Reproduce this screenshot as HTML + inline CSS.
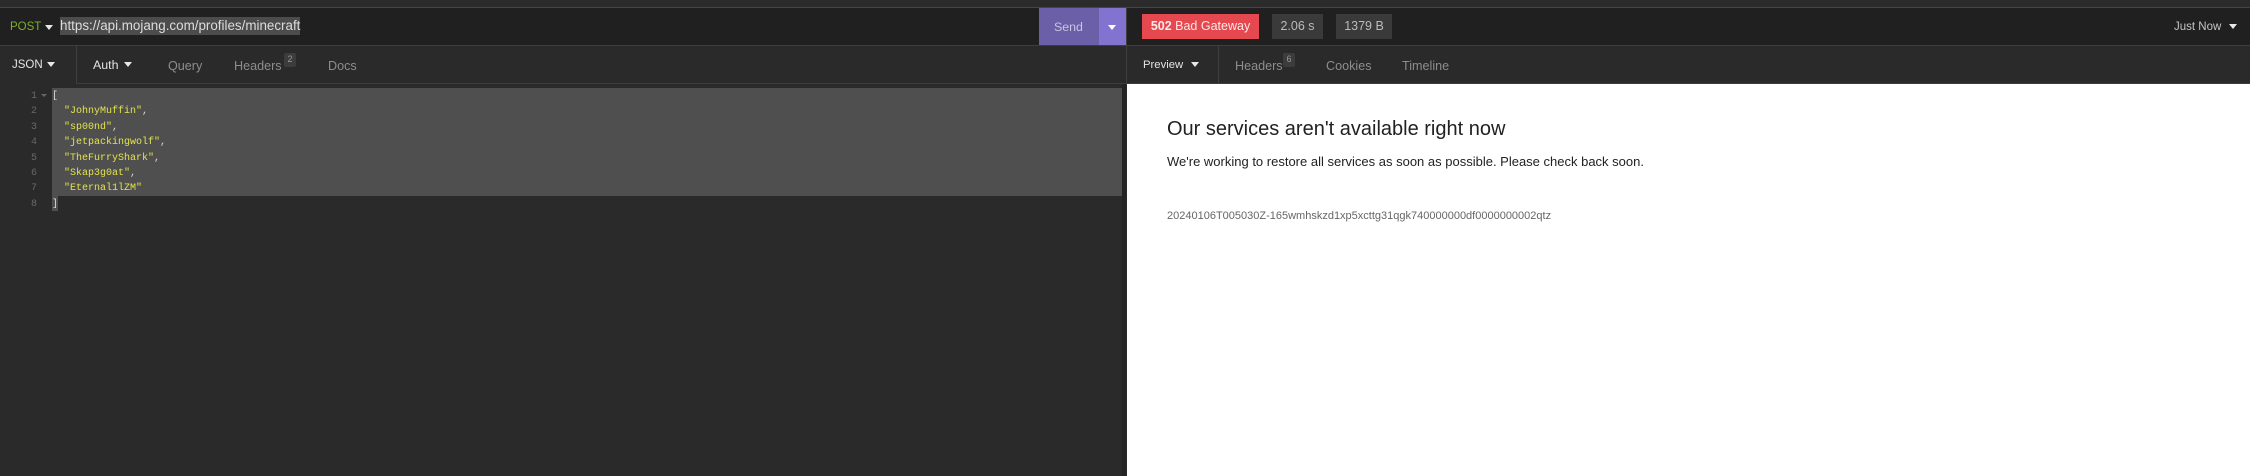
<!DOCTYPE html>
<html><head><meta charset="utf-8">
<style>
html,body{margin:0;padding:0;background:#2a2a2a;}
body{width:2250px;height:476px;position:relative;overflow:hidden;font-family:"Liberation Sans","DejaVu Sans",sans-serif;}
.a{position:absolute;white-space:nowrap;}
.tri{position:absolute;width:0;height:0;border-left:4.500px solid transparent;border-right:4.500px solid transparent;border-top:5px solid #e8e8e8;}
.t{font-size:12.600px;line-height:16px;color:#8d8d8d;}
.w{color:#e4e4e4;}
.ln{position:absolute;left:20px;width:17px;text-align:right;font:10px/15px "Liberation Mono",monospace;color:#686868;}
.c{position:absolute;left:64px;font:10px/15px "Liberation Mono",monospace;color:#e3e34f;white-space:pre;}
.c i{font-style:normal;color:#d8d8d8;}
.bad{position:absolute;top:14px;height:25px;background:#3a3a3a;color:#bbb;font-size:12.500px;line-height:25px;text-align:center;}
.bdg{position:absolute;top:53px;width:12px;height:14px;border-radius:2px;background:#3c3c3c;color:#999;font-size:9px;line-height:13px;text-align:center;}
</style></head><body>
<div class="a" style="left:0;top:0;width:2250px;height:7px;background:#2b2b2b"></div>
<div class="a" style="left:0;top:7px;width:2250px;height:1px;background:#444"></div>
<div class="a" style="left:0;top:8px;width:2250px;height:37px;background:#202020"></div>
<div class="a" style="left:0;top:45px;width:2250px;height:1px;background:#3e3e3e"></div>
<div class="a" style="left:76px;top:83px;width:1050px;height:1px;background:#3e3e3e"></div>
<div class="a" style="left:1126px;top:83px;width:1124px;height:1px;background:#3e3e3e"></div>

<div class="a" style="left:10px;top:19px;font-size:11.500px;line-height:16px;color:#7ab02e">POST</div>
<div class="tri" style="left:45px;top:25px"></div>
<div class="a" style="left:60px;top:17px;width:240px;height:18px;background:#4c4c4c"></div>
<div class="a" style="left:60px;top:18px;width:240px;font-size:13.400px;line-height:16px;color:#dcdcdc">https://api.mojang.com/profiles/minecraft</div>

<div class="a" style="left:1039px;top:8px;width:60px;height:37px;background:#6b5fa8"></div>
<div class="a" style="left:1099px;top:8px;width:27px;height:37px;background:#8373d0"></div>
<div class="a" style="left:1054px;top:8px;font-size:12.400px;line-height:38px;color:#c9c5e2">Send</div>
<div class="tri" style="left:1108px;top:25px;border-top-color:#fff"></div>

<div class="a" style="left:1126px;top:8px;width:1px;height:76px;background:#3e3e3e"></div>

<div class="a" style="left:1142px;top:14px;width:117px;height:25px;background:#e5484f;color:#fbeaea;font-size:12.500px;line-height:25px;text-align:center"><b>502</b> Bad Gateway</div>
<div class="bad" style="left:1272px;width:51px">2.06 s</div>
<div class="bad" style="left:1336px;width:56px">1379 B</div>
<div class="a" style="left:2174px;top:19px;font-size:11.500px;line-height:16px;color:#c4c4c4">Just Now</div>
<div class="tri" style="left:2229px;top:24px"></div>

<div class="a w" style="left:12px;top:57px;font-size:11.500px;line-height:16px">JSON</div>
<div class="tri" style="left:47px;top:62px"></div>
<div class="a" style="left:76px;top:46px;width:1px;height:37px;background:#3e3e3e"></div>
<div class="a w" style="left:93px;top:57px;font-size:12.400px;line-height:16px">Auth</div>
<div class="tri" style="left:124px;top:62px"></div>
<div class="a t" style="left:168px;top:58px">Query</div>
<div class="a t" style="left:234px;top:58px">Headers</div>
<div class="bdg" style="left:284px">2</div>
<div class="a t" style="left:328px;top:58px">Docs</div>

<div class="a w" style="left:1143px;top:57px;font-size:11.300px;line-height:16px">Preview</div>
<div class="tri" style="left:1191px;top:62px"></div>
<div class="a" style="left:1218px;top:46px;width:1px;height:37px;background:#3e3e3e"></div>
<div class="a t" style="left:1235px;top:58px">Headers</div>
<div class="bdg" style="left:1283px">6</div>
<div class="a t" style="left:1326px;top:58px">Cookies</div>
<div class="a t" style="left:1402px;top:58px">Timeline</div>

<div class="a" style="left:52px;top:88px;width:1070px;height:108px;background:#4f4f4f"></div>
<div class="a" style="left:52px;top:196px;width:6px;height:15px;background:#4f4f4f"></div>

<div class="ln" style="top:89px">1</div><div class="ln" style="top:104px">2</div><div class="ln" style="top:119.500px">3</div><div class="ln" style="top:135px">4</div><div class="ln" style="top:150.500px">5</div><div class="ln" style="top:165.500px">6</div><div class="ln" style="top:181px">7</div><div class="ln" style="top:196.500px">8</div>
<div class="a" style="left:41px;top:94px;width:0;height:0;border-left:3px solid transparent;border-right:3px solid transparent;border-top:3px solid #666"></div>
<div class="c" style="left:52px;top:89px"><i>[</i></div>
<div class="c" style="top:104px">"JohnyMuffin"<i>,</i></div>
<div class="c" style="top:119.500px">"sp00nd"<i>,</i></div>
<div class="c" style="top:135px">"jetpackingwolf"<i>,</i></div>
<div class="c" style="top:150.500px">"TheFurryShark"<i>,</i></div>
<div class="c" style="top:165.500px">"Skap3g0at"<i>,</i></div>
<div class="c" style="top:181px">"Eternal1lZM"</div>
<div class="c" style="left:52px;top:196.500px"><i>]</i></div>

<div class="a" style="left:1122px;top:84px;width:4px;height:392px;background:#242424"></div>
<div class="a" style="left:1126px;top:84px;width:1px;height:392px;background:#2a2a2a"></div>
<div class="a" style="left:1127px;top:84px;width:1123px;height:392px;background:#fff"></div>
<div class="a" style="left:1167px;top:117px;font-size:20px;line-height:24px;color:#222">Our services aren't available right now</div>
<div class="a" style="left:1167px;top:153px;font-size:13px;line-height:17px;color:#222">We're working to restore all services as soon as possible. Please check back soon.</div>
<div class="a" style="left:1167px;top:209px;font-size:11px;line-height:14px;color:#666">20240106T005030Z-165wmhskzd1xp5xcttg31qgk740000000df0000000002qtz</div>
</body></html>
